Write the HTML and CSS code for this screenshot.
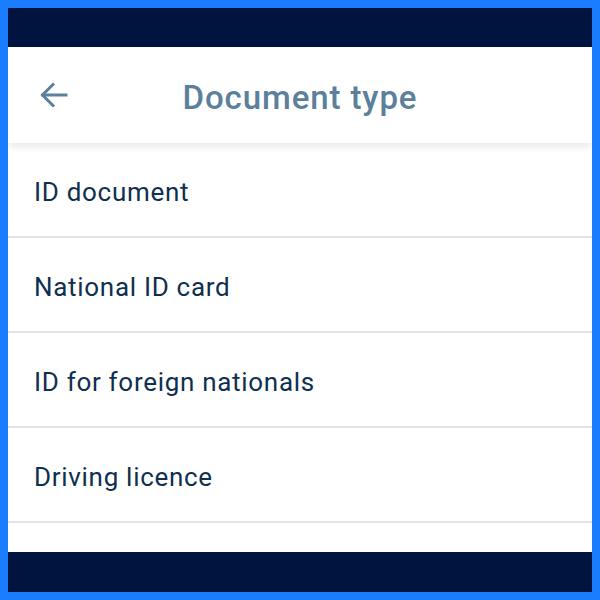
FILE: index.html
```html
<!DOCTYPE html>
<html>
<head>
<meta charset="utf-8">
<link rel="stylesheet" href="styles.css">
</head>
<body>
<div class="frame">
  <div class="screen">
    <div class="status-bar"></div>
    <header class="app-header">
      <button class="back" aria-label="Back">
        <svg width="28" height="28" viewBox="0 0 28 28" fill="none" stroke="#5b809c" stroke-width="3" stroke-linecap="square">
          <path d="M26 14H3"/>
          <path d="M14 2.5L2.5 14L14 25.5" stroke-linecap="butt" stroke-linejoin="miter"/>
        </svg>
      </button>
      <h1 class="title">Document type</h1>
    </header>
    <ul class="doc-list">
      <li class="doc-item">ID document</li>
      <li class="doc-item">National ID card</li>
      <li class="doc-item">ID for foreign nationals</li>
      <li class="doc-item">Driving licence</li>
    </ul>
    <div class="nav-bar"></div>
  </div>
</div>
</body>
</html>
```

FILE: styles.css
```css
* { box-sizing: border-box; }
html, body { margin: 0; padding: 0; }
body {
  width: 600px;
  height: 600px;
  overflow: hidden;
  font-family: Roboto, "Liberation Sans", sans-serif;
  background: #1a7cff;
}
.frame {
  width: 600px;
  height: 600px;
  padding: 8px;
  background: #1a7cff;
}
.screen {
  width: 584px;
  height: 584px;
  background: #fff;
  display: flex;
  flex-direction: column;
  overflow: hidden;
}
.status-bar {
  flex: none;
  height: 39px;
  background: #00143f;
}
.app-header {
  flex: none;
  height: 96px;
  padding-top: 4px;
  display: flex;
  align-items: center;
  justify-content: center;
  position: relative;
  background: #fff;
  box-shadow: 0 3px 8px rgba(0,0,0,0.10);
  z-index: 1;
}
.back {
  position: absolute;
  left: 32px;
  top: 34px;
  width: 28px;
  height: 28px;
  padding: 0;
  border: 0;
  background: none;
  display: flex;
}
.title {
  margin: 0;
  font-size: 33px;
  font-weight: 500;
  color: #5b809c;
  letter-spacing: 0.9px;
}
.doc-list {
  flex: 1;
  list-style: none;
  margin: 0;
  padding: 0;
}
.doc-item {
  height: 95px;
  display: flex;
  align-items: center;
  padding-left: 26px;
  padding-top: 4px;
  border-bottom: 2px solid #e1e3e8;
  font-size: 26px;
  letter-spacing: 0.7px;
  color: #0f2f50;
}
.nav-bar {
  flex: none;
  height: 40px;
  background: #00143f;
}
```
